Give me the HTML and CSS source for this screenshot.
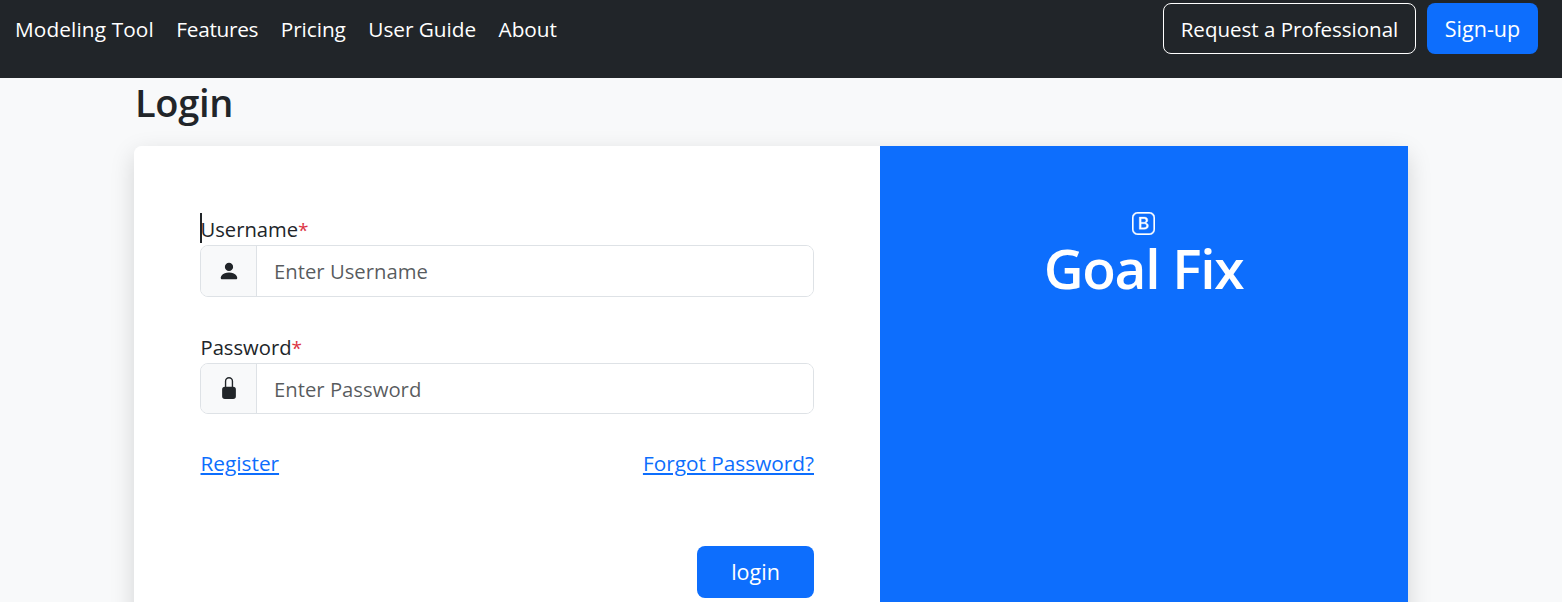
FILE: index.html
```html
<!DOCTYPE html>
<html lang="en">

<head>
    <meta charset="UTF-8">
    <meta name="viewport" content="width=device-width, initial-scale=1.0">
    <title>Login</title>
    <link rel="stylesheet" href="styles.css">
</head>

<body>
    <nav class="navbar">
        <div class="nav-links">
            <a class="nav-tool" href="#">Modeling Tool</a>
            <a class="nav-features" href="#">Features</a>
            <a href="#">Pricing</a>
            <a href="#">User Guide</a>
            <a href="#">About</a>
        </div>
        <div class="nav-actions">
            <a class="btn btn-outline" href="#">Request a Professional</a>
            <a class="btn btn-primary btn-signup" href="#">Sign-up</a>
        </div>
    </nav>

    <main class="content">
        <h1 class="page-title">Login</h1>

        <div class="login-card">
            <form class="login-form">
                <div class="field field-first">
                    <span class="caret"></span>
                    <label class="field-label">Username<span class="required">*</span></label>
                    <div class="input-group">
                        <span class="input-icon">
                            <svg width="22" height="22" viewBox="0 0 16 16" fill="#212529">
                                <path d="M3 14s-1 0-1-1 1-4 6-4 6 3 6 4-1 1-1 1H3Zm5-6a3 3 0 1 0 0-6 3 3 0 0 0 0 6Z" />
                            </svg>
                        </span>
                        <input class="input-text" type="text" placeholder="Enter Username">
                    </div>
                </div>

                <div class="field">
                    <label class="field-label">Password<span class="required">*</span></label>
                    <div class="input-group">
                        <span class="input-icon">
                            <svg width="22" height="22" viewBox="0 0 16 16" fill="#212529">
                                <path d="M8 1a2 2 0 0 1 2 2v4H6V3a2 2 0 0 1 2-2zm3 6V3a3 3 0 0 0-6 0v4a2 2 0 0 0-2 2v5a2 2 0 0 0 2 2h6a2 2 0 0 0 2-2V9a2 2 0 0 0-2-2z" />
                            </svg>
                        </span>
                        <input class="input-text" type="password" placeholder="Enter Password">
                    </div>
                </div>

                <div class="form-links">
                    <a href="#">Register</a>
                    <a href="#">Forgot Password?</a>
                </div>

                <div class="form-submit">
                    <button class="btn btn-primary btn-login" type="button">login</button>
                </div>
            </form>

            <aside class="brand-panel">
                <svg class="brand-logo" width="23" height="23" viewBox="0 0 16 16" fill="#fff">
                    <path d="M5.062 12h3.475c1.804 0 2.888-.908 2.888-2.396 0-1.102-.761-1.916-1.904-2.034v-.1c.832-.14 1.482-.93 1.482-1.816 0-1.3-.955-2.11-2.542-2.11H5.062V12zm1.313-4.875V4.658h1.78c.973 0 1.542.457 1.542 1.237 0 .802-.604 1.23-1.764 1.23H6.375zm0 3.762V8.162h1.822c1.236 0 1.887.463 1.887 1.348 0 .896-.627 1.377-1.811 1.377H6.375z" />
                    <path d="M0 4a4 4 0 0 1 4-4h8a4 4 0 0 1 4 4v8a4 4 0 0 1-4 4H4a4 4 0 0 1-4-4V4zm4-3a3 3 0 0 0-3 3v8a3 3 0 0 0 3 3h8a3 3 0 0 0 3-3V4a3 3 0 0 0-3-3H4z" />
                </svg>
                <div class="brand-name">Goal Fix</div>
            </aside>
        </div>
    </main>
</body>

</html>
```

FILE: styles.css
```css
* {
    box-sizing: border-box;
}

html,
body {
    height: 100%;
}

body {
    font-family: "Open Sans", "Noto Sans", sans-serif;
    font-size: 20.8px;
    line-height: 30px;
    margin: 0;
    overflow: hidden;
    background-color: #f8f9fa;
    color: #212529;
}

a {
    color: #0d6efd;
}

.navbar {
    height: 78px;
    background-color: #212529;
    display: flex;
    justify-content: space-between;
    align-items: flex-start;
    padding: 3px 24px 0 15px;
}

.nav-links {
    display: flex;
    gap: 22.5px;
    padding-top: 11px;
    letter-spacing: -0.05px;
}

.nav-links a {
    color: #fff;
    text-decoration: none;
}

.nav-links .nav-tool {
    letter-spacing: 0.12px;
}

.nav-links .nav-features {
    letter-spacing: -0.3px;
}

.nav-actions {
    display: flex;
    gap: 11px;
}

.btn {
    display: block;
    height: 51px;
    border: 1px solid transparent;
    border-radius: 8px;
    text-align: center;
    text-decoration: none;
    font: inherit;
    font-size: 21.5px;
    line-height: 50px;
    padding: 0;
}

.btn-primary {
    background-color: #0d6efd;
    color: #fff;
}

.btn-outline {
    width: 253px;
    font-size: 20.5px;
    border-color: #fff;
    color: #fff;
}

.btn-signup {
    width: 111px;
}

.btn-login {
    width: 117px;
    height: 52px;
}

.content {
    width: 1274px;
    margin-left: 134px;
}

.page-title {
    margin: 0 0 20px 0;
    padding-left: 1px;
    font-size: 38px;
    line-height: 48px;
    font-weight: 600;
    letter-spacing: -0.3px;
}

.login-card {
    display: flex;
    height: 600px;
    border-radius: 8px;
    box-shadow: 0 8px 24px rgba(0, 0, 0, 0.15);
}

.login-form {
    width: 746px;
    padding: 68px 66px 0;
    background-color: #fff;
    border-radius: 8px 0 0 8px;
}

.field-first {
    position: relative;
    margin-bottom: 35.2px;
}

.caret {
    position: absolute;
    left: 0;
    top: -1px;
    width: 2px;
    height: 30px;
    background-color: #212529;
}

.field-label {
    display: block;
    height: 31px;
    padding-left: 0.5px;
    font-size: 20.2px;
}

.required {
    color: #dc3545;
    font-size: 19px;
}

.input-group {
    display: flex;
    height: 51.5px;
    border: 1px solid #dee2e6;
    border-radius: 8px;
    overflow: hidden;
}

.input-icon {
    width: 56px;
    display: flex;
    align-items: center;
    justify-content: center;
    background-color: #f8f9fa;
    border-right: 1px solid #dee2e6;
}

.input-text {
    flex: 1;
    border: none;
    outline: none;
    padding: 1px 17px 0;
    font: inherit;
    font-size: 20.3px;
    color: #212529;
}

.input-text::placeholder {
    color: rgba(33, 37, 41, 0.75);
    opacity: 1;
}

.form-links {
    display: flex;
    justify-content: space-between;
    margin-top: 34px;
    padding-left: 0.5px;
}

.form-submit {
    display: flex;
    justify-content: flex-end;
    margin-top: 67.8px;
}

.brand-panel {
    flex: 1;
    background-color: #0d6efd;
    color: #fff;
    display: flex;
    flex-direction: column;
    align-items: center;
    padding-top: 66px;
}

.brand-logo {
    margin-right: 1px;
    stroke: #fff;
    stroke-width: 0.25;
}

.brand-name {
    margin-top: -1px;
    margin-right: 1px;
    font-size: 55px;
    line-height: 68px;
    font-weight: 600;
    letter-spacing: -1.3px;
}
```
